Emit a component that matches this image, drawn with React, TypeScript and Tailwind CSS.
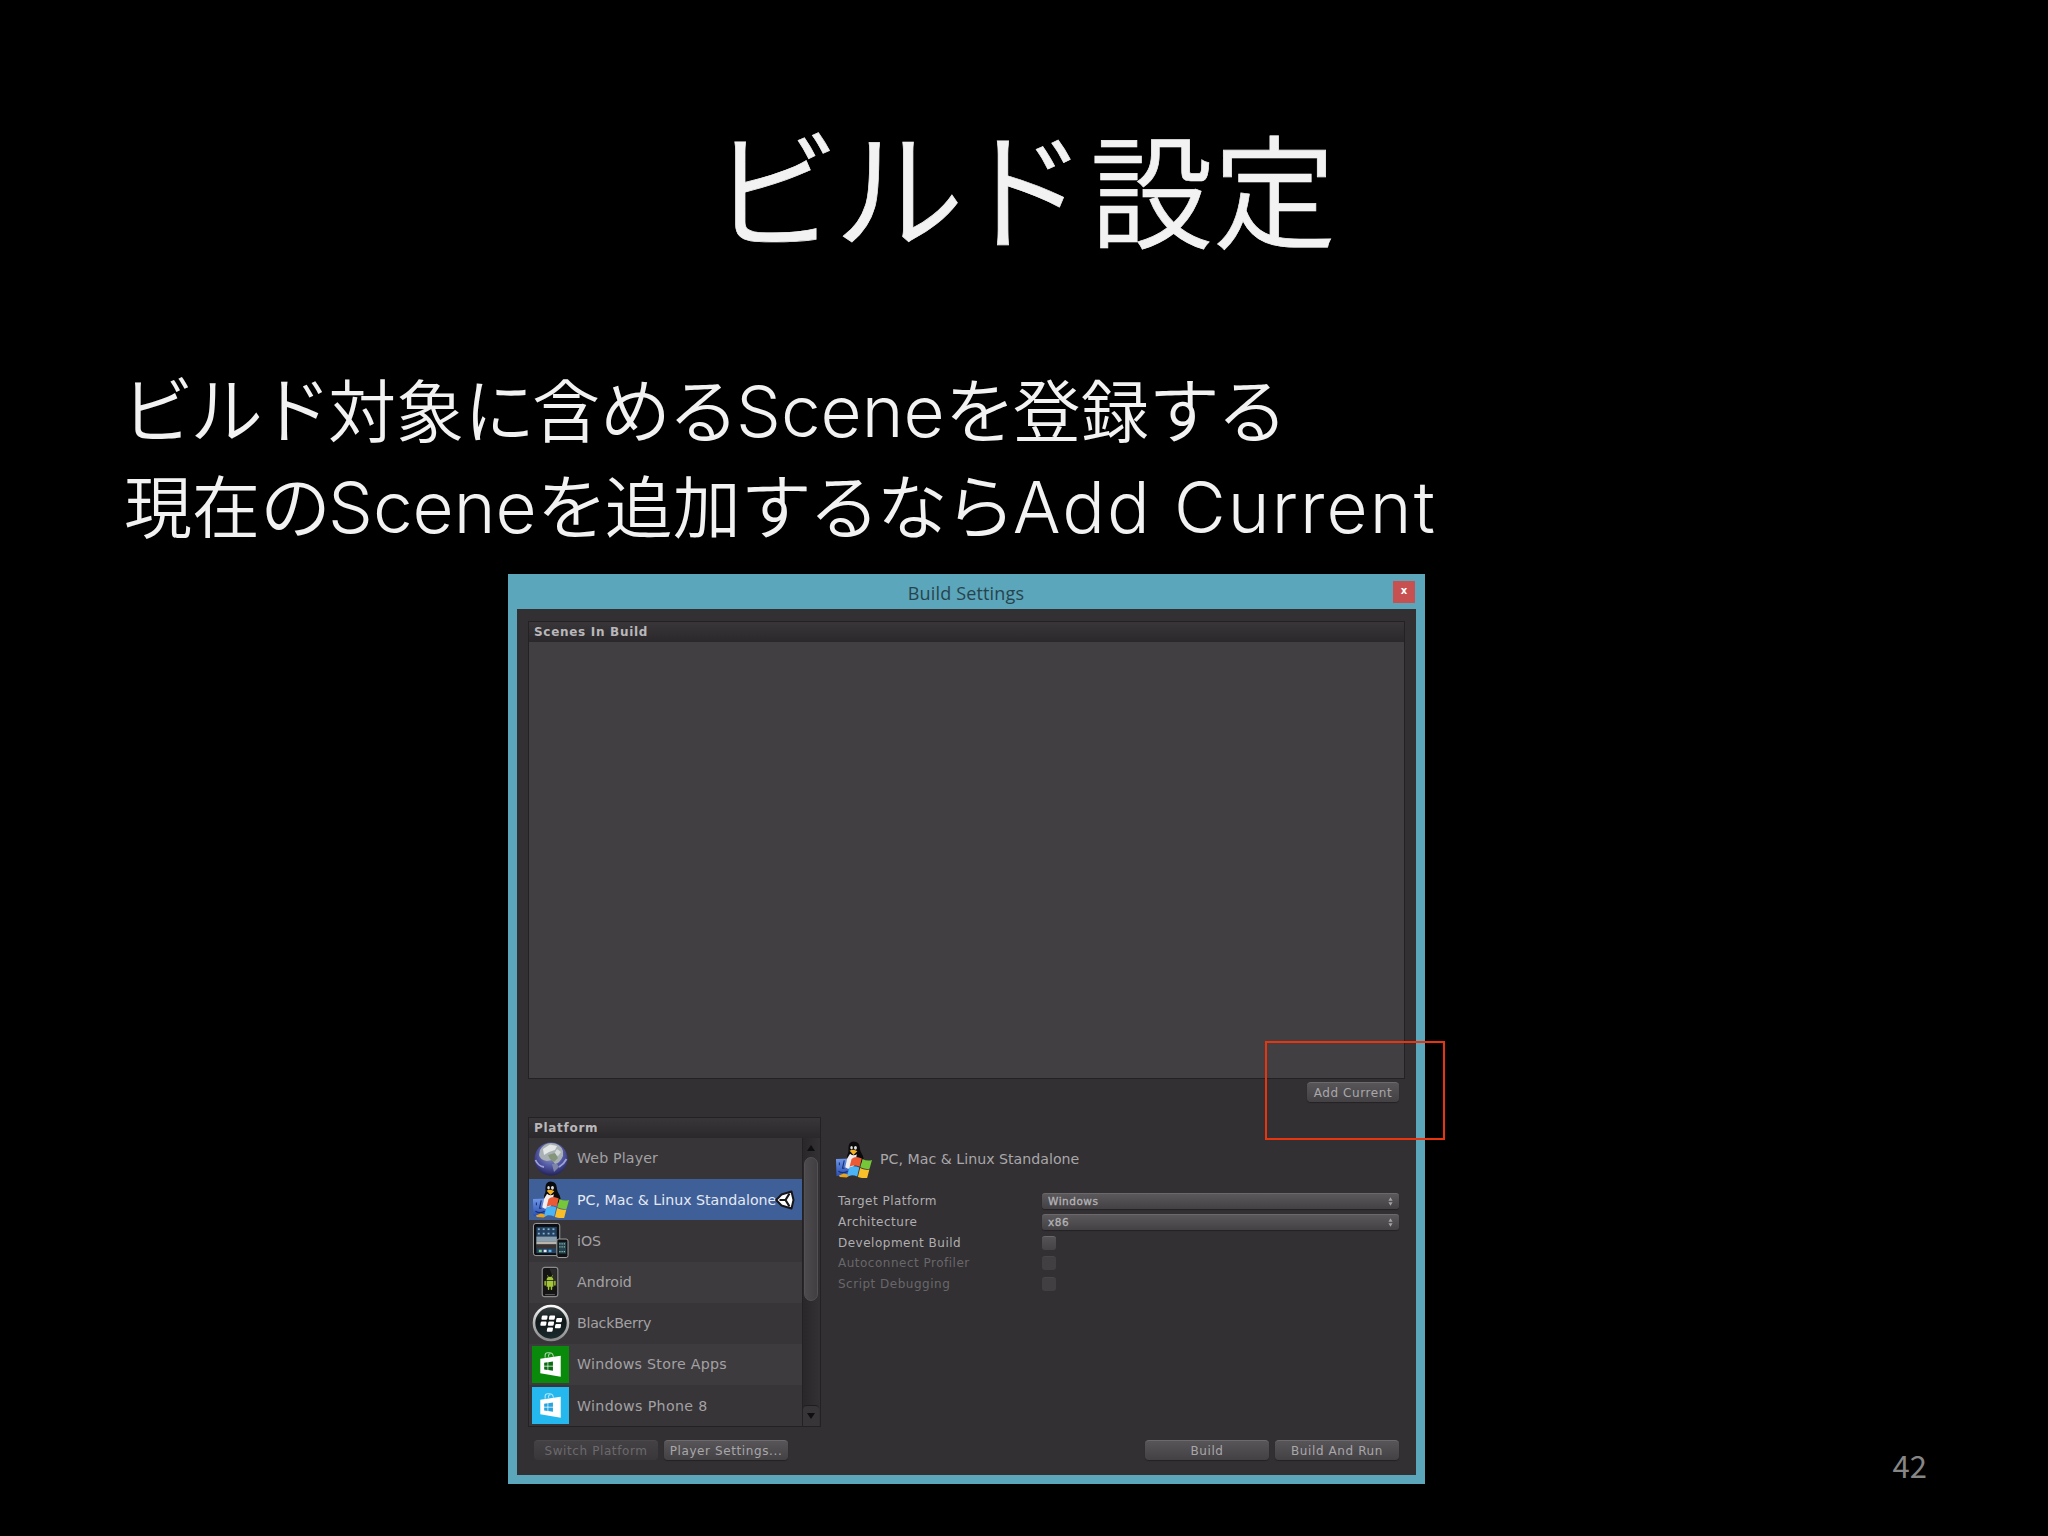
import React from "react";
import clsx from "clsx";

type IconProps = { className?: string };

const GlobeIcon = ({ className }: IconProps) => (
  <svg viewBox="0 0 36 36" className={className}>
    <defs>
      <radialGradient id="ocean" cx="50%" cy="35%" r="65%">
        <stop offset="0%" stopColor="#9aa6c4" />
        <stop offset="60%" stopColor="#5055a2" />
        <stop offset="100%" stopColor="#24245c" />
      </radialGradient>
    </defs>
    <circle cx="18" cy="18" r="16.500" fill="url(#ocean)" />
    <path d="M7 9 Q11 2 18 2 Q27 2 30 10 L30 15 Q27 22 22 23 L19 19 L14 20 Q7 19 6 14 Z" fill="#a9b0b4" />
    <path d="M10 8 L17 3.500 L24 5 L22 9 L16 11 L11 14 Z" fill="#e3e7e6" />
    <path d="M24 8 L28 11 L25 15 L21 13 Z" fill="#d3d8d8" />
    <path d="M15 14 L22 12 L25 17 L21 21 L17 18 Z" fill="#85957a" />
    <path d="M19 23 L24 23 L26 26 L21 31 Z" fill="#7f85a8" />
    <path d="M2.500 19 Q5 25 11 26 M26 26 Q31 23 33.500 18" stroke="#9ba1d4" strokeWidth="1.800" fill="none" />
  </svg>
);

const StandaloneIcon = ({ className }: IconProps) => (
  <svg viewBox="0 0 38 38" className={className}>
    <defs>
      <linearGradient id="finder" x1="0" y1="0" x2="0" y2="1">
        <stop offset="0%" stopColor="#6f97e8" />
        <stop offset="100%" stopColor="#2b50b4" />
      </linearGradient>
    </defs>
    <path d="M1 18.500 L17 18 V36 H1.500 Z" fill="url(#finder)" />
    <path d="M4.500 22 v3 M9.500 20 l-1.800 8 h2 M3.500 31 Q8 34 13 31" stroke="#173070" strokeWidth="1.100" fill="none" />
    <path d="M4 35.500 L9 33.500 L16 35 L12 37.500 L5 37 Z" fill="#e8a41c" />
    <path d="M19 0.500 Q25 0.500 25.500 7 Q25.500 10 28.500 15 Q30 18 29 22 L12 28 L12.500 15 Q14.500 12 13.800 7 Q13.800 1 19 0.500 Z" fill="#0a0a0c" />
    <path d="M15.500 13 Q19 16 22.500 13.500 L20 25 Q16 31 10.500 27 L12.500 18 Z" fill="#f2eef0" />
    <ellipse cx="17" cy="7" rx="1.300" ry="1.800" fill="#ddd" />
    <ellipse cx="21" cy="7" rx="1.500" ry="1.900" fill="#ddd" />
    <path d="M15 10 Q19 7.500 23 10.500 L19 14.300 Z" fill="#f4b223" />
    <path d="M17 18.500 Q21 14.500 27.500 18 L25.300 26.500 Q20 23.800 15 26.500 Z" fill="#ea5a35" />
    <path d="M28.300 18.500 Q33 21 38 19.500 L35.500 28.500 Q31 29.500 26 27 Z" fill="#76c63a" />
    <path d="M14.700 27.300 Q20 24.500 25 27.200 L22.800 36.500 Q18 34 12.500 36 Z" fill="#4ab4f4" />
    <path d="M25.800 27.800 Q30.500 30.200 35.300 29.200 L33 38 Q27 38.500 23.500 37 Z" fill="#f9bf2a" />
  </svg>
);

const IosIcon = ({ className }: IconProps) => (
  <svg viewBox="0 0 38 38" className={className}>
    <rect x="1.500" y="1.500" width="27" height="33" rx="2.500" fill="#0c0d10" stroke="#a0a0a0" />
    <rect x="4.500" y="5" width="21" height="27" fill="#24415f" />
    <rect x="4.500" y="15" width="21" height="5" fill="#8ba0ae" />
    <rect x="4.500" y="20" width="21" height="3" fill="#b9b4ac" />
    <rect x="4.500" y="23" width="21" height="4" fill="#3a3230" />
    <g fill="#86b4d4">
      <rect x="6" y="6.500" width="2" height="1.800" />
      <rect x="11" y="6.500" width="2" height="1.800" />
      <rect x="16" y="6.500" width="2" height="1.800" />
      <rect x="21" y="6.500" width="2" height="1.800" />
      <rect x="6" y="11" width="2" height="1.800" />
      <rect x="11" y="11" width="2" height="1.800" />
      <rect x="16" y="11" width="2" height="1.800" />
      <rect x="21" y="11" width="2" height="1.800" />
    </g>
    <rect x="7" y="28.500" width="3" height="2.500" fill="#7fd08a" />
    <rect x="12" y="28.500" width="3" height="2.500" fill="#e6eef4" />
    <rect x="17" y="28.500" width="3" height="2.500" fill="#5bb4ea" />
    <rect x="25.500" y="17.500" width="11.500" height="19" rx="2" fill="#101113" stroke="#a2a2a2" />
    <rect x="27.500" y="20.500" width="7.500" height="12" fill="#24424c" />
    <path d="M28 22.500 h6.500 M28 25.500 h6.500 M28 30.500 h6.500" stroke="#8fb9b4" strokeWidth="1.200" strokeDasharray="1.300 1" />
  </svg>
);

const AndroidIcon = ({ className }: IconProps) => (
  <svg viewBox="0 0 38 38" className={className}>
    <rect x="10.500" y="3.500" width="16" height="30" rx="2.500" fill="#141414" stroke="#8b8b8b" strokeWidth="1.200" />
    <path d="M18 4.500 h7.500 v20 z" fill="#2c2c2c" />
    <path d="M15 16.500 a3.500 3.500 0 0 1 7 0 z M15 17.300 h7 v6 h-7 z" fill="#a4c639" />
    <path d="M13.500 18 v3.600 M23.500 18 v3.600 M17 23 v3 M20 23 v3" stroke="#a4c639" strokeWidth="1.500" strokeLinecap="round" />
    <path d="M15.800 11.500 l1 1.800 M21.200 11.500 l-1 1.800" stroke="#a4c639" strokeWidth="0.700" />
    <path d="M13.500 31.500 h10" stroke="#666" strokeWidth="1" />
  </svg>
);

const BlackBerryIcon = ({ className }: IconProps) => (
  <svg viewBox="0 0 38 38" className={className}>
    <defs>
      <linearGradient id="ring" x1="0" y1="0" x2="0" y2="1">
        <stop offset="0%" stopColor="#fafafa" />
        <stop offset="50%" stopColor="#b4b4b4" />
        <stop offset="100%" stopColor="#8c8c8c" />
      </linearGradient>
      <linearGradient id="disc" x1="0" y1="0" x2="0" y2="1">
        <stop offset="0%" stopColor="#3a4143" />
        <stop offset="45%" stopColor="#10181a" />
        <stop offset="100%" stopColor="#1c2c2f" />
      </linearGradient>
    </defs>
    <circle cx="19" cy="19" r="17" fill="url(#disc)" stroke="url(#ring)" strokeWidth="2.600" />
    <g fill="#fff" transform="skewX(-10) translate(3 0)">
      <rect x="9" y="11.500" width="5.800" height="4.200" rx="1" />
      <rect x="16.500" y="11.500" width="5.800" height="4.200" rx="1" />
      <rect x="9" y="17.500" width="5.800" height="4.200" rx="1" />
      <rect x="16.500" y="17.500" width="5.800" height="4.200" rx="1" />
      <rect x="24" y="14" width="5.800" height="4.200" rx="1" />
      <rect x="24" y="20" width="5.800" height="4.200" rx="1" />
      <rect x="16.500" y="23.500" width="5.800" height="4.200" rx="1" />
    </g>
  </svg>
);

const StoreIcon = ({ className, color, logo }: IconProps & { color: string; logo: string }) => (
  <svg viewBox="0 0 38 38" className={className}>
    <rect width="38" height="38" fill={color} />
    <path d="M13.500 12 v-2.500 q0-2.500 2.500-2.500 h2 q3.500 0 4 4 M17 11 v-1.500 q0-1.500 2-1.500" fill="none" stroke="#fff" strokeOpacity="0.650" strokeWidth="1.100" />
    <path d="M8.500 13 L29.500 10 V31.500 L8.500 28 Z" fill="#fff" />
    <path d="M12.500 17.200 l3.500-.5 v3.600 h-3.500 z M16.700 16.600 l4.800-.8 v4.500 h-4.800 z M12.500 21 h3.500 v3.600 l-3.500-.5 z M16.700 21 h4.800 v4.500 l-4.800-.8 z" fill={logo} />
  </svg>
);

const UnityMark = ({ className }: IconProps) => (
  <svg viewBox="0 0 20 20" className={className}>
    <path d="M1.200 10 L6.500 4.500 L16.500 1.500 L18.500 10 L16.500 18.500 L6.500 15.500 Z" fill="#fff" stroke="#15151a" strokeWidth="2" strokeLinejoin="round" />
    <path d="M10.500 10 L4.500 10 M10.500 10 L14.500 3.500 M10.500 10 L14.500 16.500" stroke="#15151a" strokeWidth="2.200" />
  </svg>
);

const platforms = [
  { name: "Web Player", icon: <GlobeIcon className="size-9" />, tracking: "tracking-[0.150px]" },
  { name: "PC, Mac & Linux Standalone", icon: <StandaloneIcon className="size-[37px]" />, selected: true },
  { name: "iOS", icon: <IosIcon className="size-[37px]" /> },
  { name: "Android", icon: <AndroidIcon className="size-[37px]" /> },
  { name: "BlackBerry", icon: <BlackBerryIcon className="size-[38px]" />, tracking: "tracking-[-0.250px]" },
  {
    name: "Windows Store Apps",
    icon: <StoreIcon className="size-[37px]" color="#0a8a0a" logo="#0b6b12" />,
    tracking: "tracking-[0.280px]",
  },
  {
    name: "Windows Phone 8",
    icon: <StoreIcon className="size-[37px]" color="#25b8ee" logo="#25a4de" />,
    tracking: "tracking-[0.350px]",
  },
];

const Button = ({ children, className, disabled }: { children: React.ReactNode; className?: string; disabled?: boolean }) => (
  <button
    disabled={disabled}
    className={clsx(
      "flex h-5 items-center justify-center rounded-[4px] border-t text-[12px] leading-none tracking-[0.600px] whitespace-nowrap",
      disabled
        ? "border-[#4a484b] bg-linear-to-b from-[#434144] to-[#39373a] text-[#6c6a6d]"
        : "border-[#6c6a6d] bg-linear-to-b from-[#575558] to-[#434144] text-[#a9a7aa] shadow-[0_1px_1px_#242225]",
      className
    )}
  >
    {children}
  </button>
);

const Popup = ({ value }: { value: string }) => (
  <div className="flex h-4 w-[357px] items-center justify-between rounded-[3px] border-t border-[#6a686b] bg-linear-to-b from-[#5a585b] to-[#434144] px-1.5 pb-px text-[10.500px] leading-none tracking-[0.500px] text-[#b5b3b6] shadow-[0_1px_1px_#242225] [-webkit-text-stroke:0.300px]">
    <span>{value}</span>
    <svg viewBox="0 0 6 10" className="h-[9px] w-[5px]">
      <path d="M3 0 L5.500 4 H0.500 Z M3 10 L5.500 6 H0.500 Z" fill="#a4a2a5" />
    </svg>
  </div>
);

const Check = ({ disabled }: { disabled?: boolean }) => (
  <div
    className={clsx(
      "h-[14px] w-[14px] rounded-[3px] border-t",
      disabled ? "border-[#474548] bg-[#413f42]" : "border-[#69676a] bg-linear-to-b from-[#545255] to-[#454346]"
    )}
  />
);

const options = [
  { label: "Target Platform", control: <Popup value="Windows" /> },
  { label: "Architecture", control: <Popup value="x86" /> },
  { label: "Development Build", control: <Check /> },
  { label: "Autoconnect Profiler", control: <Check disabled />, disabled: true },
  { label: "Script Debugging", control: <Check disabled />, disabled: true },
];

const PanelHeader = ({ children }: { children: React.ReactNode }) => (
  <div className="flex h-5 shrink-0 items-center bg-linear-to-b from-[#383639] to-[#2a282b] pl-[5px] text-[12px] leading-none font-bold tracking-[0.700px] text-[#b9b7ba]">
    {children}
  </div>
);

const PlatformList = () => (
  <div className="flex h-[310px] w-[293px] flex-col border border-[#232124]">
    <PanelHeader>Platform</PanelHeader>
    <div className="flex min-h-0 flex-1">
      <div className="w-[273px] overflow-hidden">
        {platforms.map((p, i) => (
          <div
            key={p.name}
            className={clsx(
              "flex h-[41.200px] items-center text-[14.200px]",
              p.selected ? "bg-[#3f5f98] text-[#e4e9f3]" : "text-[#a3a1a4]",
              !p.selected && (i % 2 ? "bg-[#3d3b3e]" : "bg-[#373538]")
            )}
          >
            <div className="flex w-[43px] shrink-0 justify-center">{p.icon}</div>
            <span className={clsx("pt-px pl-[5px] whitespace-nowrap", p.tracking)}>{p.name}</span>
            {p.selected && <UnityMark className="-ml-[1px] size-5 shrink-0" />}
          </div>
        ))}
      </div>
      <div className="flex flex-1 flex-col items-center border-l border-[#232124] bg-linear-to-r from-[#29272a] to-[#333134] pr-px">
        <div className="flex h-[19px] items-center">
          <svg viewBox="0 0 8 6" className="h-1.5 w-2">
            <path d="M4 0 L8 6 H0 Z" fill="#0f0e10" />
          </svg>
        </div>
        <div className="h-[144px] w-[14px] rounded-full border border-[#535154] bg-linear-to-r from-[#4c4a4d] to-[#413f42]" />
        <div className="flex-1" />
        <div className="flex h-[21px] w-full items-center justify-center rounded-t-sm border-t border-[#1f1d20] bg-[#373538]">
          <svg viewBox="0 0 8 6" className="h-1.5 w-2">
            <path d="M4 6 L8 0 H0 Z" fill="#0f0e10" />
          </svg>
        </div>
      </div>
    </div>
  </div>
);

const BuildSettingsWindow = () => (
  <div className="relative flex h-[910px] w-[917px] flex-col bg-[#5ba6ba] px-[9px] pb-[9px] font-['DejaVu_Sans',sans-serif]">
    <div className="flex h-[35px] shrink-0 items-center">
      <div className="w-[22px]" />
      <div className="flex-1 pt-[3px] text-center font-['Open_Sans',sans-serif] text-[18px] leading-none tracking-[0.150px] text-[#27444e]">
        Build Settings
      </div>
      <div className="mr-[1px] flex h-[22px] w-[22px] items-center justify-center bg-[#c75050] pb-[1px] text-[10px] leading-none font-bold text-white">
        x
      </div>
    </div>
    <div className="flex flex-1 flex-col bg-[#323033] pt-3 pr-[11px] pl-[11px]">
      <div className="flex h-[458px] w-[877px] flex-col border border-[#232124] bg-[#413f42]">
        <PanelHeader>Scenes In Build</PanelHeader>
      </div>
      <div className="flex h-[38px] justify-end pt-[3px] pr-1.5">
        <Button className="w-[92px]">Add Current</Button>
      </div>
      <div className="flex">
        <PlatformList />
        <div className="flex flex-col pt-[23px] pl-[14px]">
          <div className="flex h-[38px] items-center text-[14.200px] text-[#a9a7aa]">
            <StandaloneIcon className="size-[37px]" />
            <span className="pt-px pl-[8px]">PC, Mac &amp; Linux Standalone</span>
          </div>
          <div className="flex flex-col pt-[13px] pl-[3px]">
            {options.map((o) => (
              <div key={o.label} className="flex h-[20.700px] items-center">
                <span
                  className={clsx(
                    "w-[204px] text-[12px] leading-none tracking-[0.500px]",
                    o.disabled ? "text-[#69676a]" : "text-[#b0aeb1]"
                  )}
                >
                  {o.label}
                </span>
                {o.control}
              </div>
            ))}
          </div>
        </div>
      </div>
      <div className="flex pt-[13px] pr-1.5 pl-[6px]">
        <Button disabled className="w-[124px]">Switch Platform</Button>
        <Button className="ml-1.5 w-[124px]">Player Settings...</Button>
        <div className="flex-1" />
        <Button className="w-[124px]">Build</Button>
        <Button className="ml-1.5 w-[124px]">Build And Run</Button>
      </div>
    </div>
    {/* highlight around the Add Current button */}
    <div className="absolute top-[467px] left-[757px] h-[99px] w-[180px] border-2 border-[#e8350f]" />
  </div>
);

const Latin = ({ children, className }: { children: React.ReactNode; className?: string }) => (
  <span className={clsx("font-['Inter',sans-serif] text-[71px] leading-none font-[350]", className)}>{children}</span>
);

const Kana = ({ children, className }: { children: React.ReactNode; className?: string }) => (
  <span className={clsx("leading-none", className ?? "text-[71px] tracking-[-3px]")}>{children}</span>
);

export default function App() {
  return (
    <div className="flex h-[1536px] w-[2048px] flex-col overflow-hidden bg-black font-['Noto_Sans_CJK_JP',sans-serif] text-[#f2f2f2]">
      <h1 className="h-[352px] pt-[100px] pl-[710px] text-[123px] leading-[170px] font-[350] whitespace-nowrap [-webkit-text-stroke:0.700px]">
        <Kana className="mr-[8px] text-[130px] tracking-[-6px]">ビルド</Kana>設定
      </h1>
      <div className="h-[222px] pl-[124px] text-[68px] leading-[96px] font-[350] whitespace-nowrap">
        <p className="pt-[8px]">
          <Kana className="-ml-[3px] text-[73px] tracking-[-4px]">ビルド</Kana>対象<Kana>に</Kana>含<Kana>める</Kana>
          <Latin>Scene</Latin>
          <Kana>を</Kana>登録<Kana>する</Kana>
        </p>
        <p>
          現在<Kana>の</Kana>
          <Latin>Scene</Latin>
          <Kana>を</Kana>追加<Kana>するなら</Kana>
          <Latin className="tracking-[2.100px]">Add Current</Latin>
        </p>
      </div>
      <div className="flex flex-1 pl-[508px]">
        <BuildSettingsWindow />
        <div className="flex flex-1 items-end justify-end pr-[121px] pb-[56px] text-[31px] leading-none text-[#868686]">
          42
        </div>
      </div>
    </div>
  );
}
